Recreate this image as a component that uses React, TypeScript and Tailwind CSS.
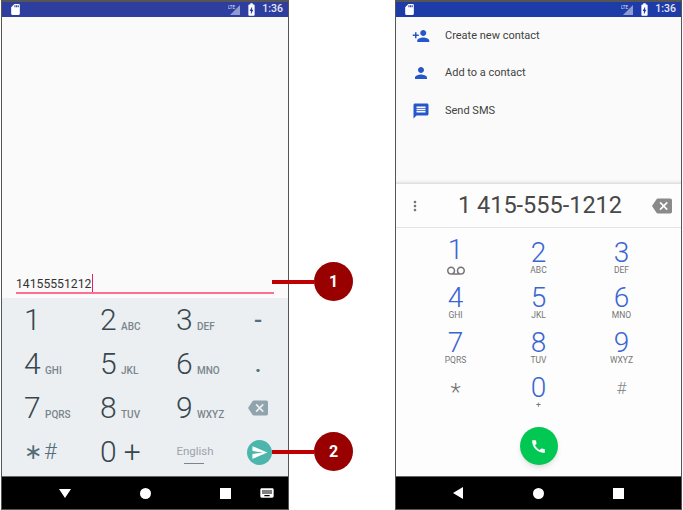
import { MdBackspace, MdBatteryChargingFull, MdCall, MdKeyboard, MdMessage, MdMoreVert, MdPerson, MdPersonAdd, MdSdCard, MdSend, MdVoicemail } from 'react-icons/md'

const ROBOTO = { fontFamily: 'Roboto, sans-serif' }

const IME_ROWS = [
  [['1', ''], ['2', 'ABC'], ['3', 'DEF']],
  [['4', 'GHI'], ['5', 'JKL'], ['6', 'MNO']],
  [['7', 'PQRS'], ['8', 'TUV'], ['9', 'WXYZ']],
]
const IME_SIDE = ['-', '.']

const DIAL_KEYS = [
  ['1', ''], ['2', 'ABC'], ['3', 'DEF'],
  ['4', 'GHI'], ['5', 'JKL'], ['6', 'MNO'],
  ['7', 'PQRS'], ['8', 'TUV'], ['9', 'WXYZ'],
]

const ACTIONS = [
  { label: 'Create new contact', Icon: MdPersonAdd },
  { label: 'Add to a contact', Icon: MdPerson },
  { label: 'Send SMS', Icon: MdMessage },
]

function StatusBar({ color }: { color: string }) {
  return (
    <div className={`h-[15px] flex items-center pl-[7px] pr-[5px] shrink-0 text-white ${color}`}>
      <MdSdCard className="w-[13px] h-[13px]" />
      <div className="ml-auto flex items-center">
        <svg width="13" height="10" viewBox="0 0 13 10" className="mr-[3px]">
          <polygon points="12,0 12,10 2,10" fill="#8f9bd0" />
          <text x="0" y="4" fontSize="4.5" fill="#dfe3f3" fontFamily="Roboto, sans-serif">LTE</text>
        </svg>
        <MdBatteryChargingFull className="w-[15px] h-[15px]" />
        <span className="ml-[3px] text-[10.5px] font-medium leading-none text-[#e6e8f4]">1:36</span>
      </div>
    </div>
  )
}

function Phone({ width, children }: { width: string; children: React.ReactNode }) {
  return (
    <div className={`h-[510px] border border-[#555] border-t-2 bg-[#fafafa] flex flex-col shrink-0 ${width}`}>
      {children}
    </div>
  )
}

function Callout({ n, top, left }: { n: string; top: string; left: string }) {
  return (
    <div className={`absolute flex items-center ${top} ${left}`}>
      <div className="w-[42px] h-[4px] bg-[#c00000]" />
      <div className="w-[39px] h-[39px] rounded-full bg-[#990000] text-white text-[16px] font-bold flex items-center justify-center">{n}</div>
    </div>
  )
}

export default function App() {
  return (
    <div className="relative w-[683px] h-[510px] bg-white flex text-[#37474f] overflow-hidden" style={ROBOTO}>
      {/* 左：输入法 */}
      <div className="ml-px">
        <Phone width="w-[288px]">
          <StatusBar color="bg-[#2d3e9f]" />
          <div className="flex-1 flex flex-col justify-end px-[14px]">
            <div className="h-[22px] pt-[4px] border-b-2 border-[#ff6f95] text-[12.2px] leading-[16px] text-[#333] flex">
              14155551212<span className="w-px h-[18px] -mt-[2px] ml-px bg-[#e91e63]" />
            </div>
          </div>
          <div className="h-[178px] mt-[4px] bg-[#eceff1]">
            {IME_ROWS.map((row, i) => (
              <div key={i} className="h-[44px] flex items-center">
                {row.map(([d, l]) => (
                  <div key={d} className="w-[76px] pl-[22px] flex items-baseline">
                    <span className="text-[30px] font-light leading-none w-[21px]">{d}</span>
                    <span className="text-[10px] font-medium text-[#78868d]">{l}</span>
                  </div>
                ))}
                <div className="flex-1 flex justify-center pr-[2px] text-[24px] font-medium text-[#546e7a]">
                  {i < 2 ? IME_SIDE[i] : <MdBackspace className="w-[20px] h-[20px] text-[#90a4ae]" />}
                </div>
              </div>
            ))}
            <div className="h-[44px] flex items-center">
              <div className="w-[76px] pl-[22px] text-[22px] font-light leading-none tracking-[2px] text-[#546e7a]">∗#</div>
              <div className="w-[76px] pl-[22px] flex items-center text-[30px] font-light leading-none gap-[7px]">
                <span>0</span><span>+</span>
              </div>
              <div className="w-[77px] pl-[10px] relative text-[11.5px] text-[#9aa5ab] text-center">
                <span className="block pr-[5px]">English</span>
                <div className="absolute left-[30px] top-[20px] w-[20px] h-px bg-[#78868d]" />
              </div>
              <div className="ml-[16px] w-[25px] h-[25px] rounded-full bg-[#4db6ac] flex items-center justify-center">
                <MdSend className="w-[17px] h-[17px] text-white" />
              </div>
            </div>
          </div>
          <div className="h-[33px] bg-black border-t border-[#666] flex items-center text-white relative shrink-0">
            <div className="ml-[57px] w-0 h-0 border-l-[6px] border-r-[6px] border-t-[9px] border-l-transparent border-r-transparent border-t-white" />
            <div className="ml-[69px] w-[11px] h-[11px] rounded-full bg-white" />
            <div className="ml-[69px] w-[11px] h-[11px] bg-white" />
            <MdKeyboard className="ml-[28px] w-[16px] h-[16px]" />
          </div>
        </Phone>
      </div>

      {/* 右：拨号器 */}
      <div className="ml-[106px]">
        <Phone width="w-[287px]">
          <StatusBar color="bg-[#1e3ca8]" />
          <div className="h-[167px] shrink-0 border-b border-[#e0e0e0] shadow-[inset_0_-3px_3px_-2px_rgba(0,0,0,0.1)]">
            {ACTIONS.map(({ label, Icon }) => (
              <div key={label} className="h-[37.5px] flex items-center text-[11px] text-[#424242]">
                <div className="w-[35px] flex justify-end pr-[1px]">
                  <Icon className="w-[18px] h-[18px] text-[#2756cc]" />
                </div>
                <span className="ml-[14px]">{label}</span>
              </div>
            ))}
          </div>
          <div className="h-[44px] shrink-0 bg-[#fdfdfd] border-b border-[#e4e4e4] flex items-center text-[#484848]">
            <MdMoreVert className="ml-[11px] w-[16px] h-[16px] text-[#757575]" />
            <span className="ml-[28px] text-[23.5px] w-[178px] text-center leading-none">1 415-555-1212</span>
            <MdBackspace className="ml-[23px] w-[20px] h-[20px] text-[#8a8a8a]" />
          </div>
          <div className="flex-1 bg-[#fdfdfd] pt-[12px] relative">
            <div className="grid grid-cols-[1fr_1fr_1fr] px-[18px] auto-rows-[45px]">
              {DIAL_KEYS.map(([d, l]) => (
                <div key={d} className="flex flex-col items-center">
                  {l ? (
                    <>
                      <span className="text-[28px] font-light leading-[26px] text-[#3a66d4]">{d}</span>
                      <span className="text-[8.5px] leading-[8px] text-[#757575]">{l}</span>
                    </>
                  ) : (
                    <>
                      <span className="text-[28px] font-light leading-[26px] -mt-[3px] text-[#3a66d4]">{d}</span>
                      <MdVoicemail className="w-[18px] h-[18px] -mt-[1px] text-[#757575]" />
                    </>
                  )}
                </div>
              ))}
              <div className="flex justify-center text-[24px] font-light text-[#757575] leading-[26px] pt-[4px]">*</div>
              <div className="flex flex-col items-center">
                <span className="text-[28px] font-light leading-[26px] text-[#3a66d4]">0</span>
                <span className="text-[8.5px] leading-[8px] text-[#757575]">+</span>
              </div>
              <div className="flex justify-center text-[17px] font-light text-[#8a8a8a] leading-[26px]">#</div>
            </div>
            <div className="mt-[7px] flex justify-center">
              <div className="w-[38px] h-[38px] rounded-full bg-[#00c853] shadow-md flex items-center justify-center">
                <MdCall className="w-[17px] h-[17px] text-white" />
              </div>
            </div>
          </div>
          <div className="h-[33px] bg-black border-t border-[#666] flex items-center shrink-0">
            <div className="ml-[57px] w-0 h-0 border-y-[6px] border-r-[10px] border-y-transparent border-r-white" />
            <div className="ml-[70px] w-[11px] h-[11px] rounded-full bg-white" />
            <div className="ml-[69px] w-[11px] h-[11px] bg-white" />
          </div>
        </Phone>
      </div>

      <Callout n="1" top="top-[262px]" left="left-[272px]" />
      <Callout n="2" top="top-[432px]" left="left-[272px]" />
    </div>
  )
}
